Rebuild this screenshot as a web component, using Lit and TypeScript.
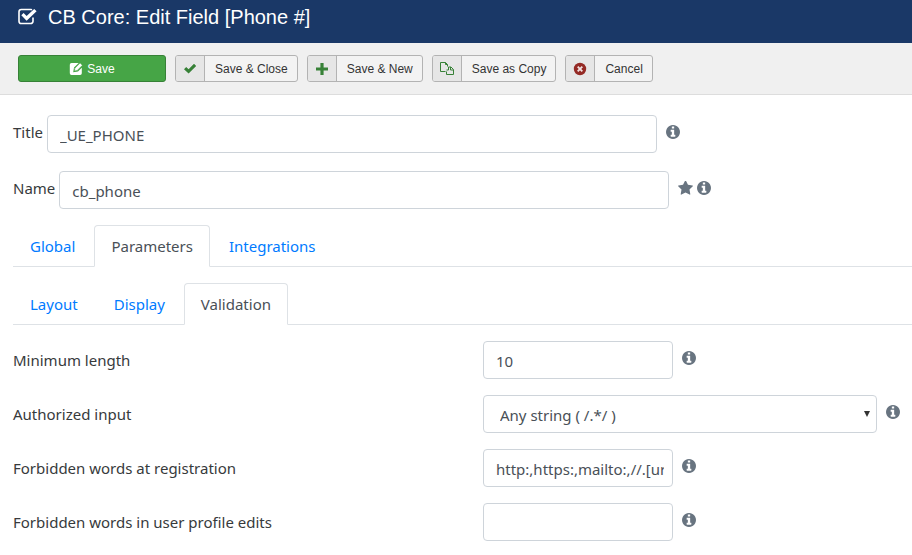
import { LitElement, html, css, svg } from "lit";
import { customElement, state } from "lit/decorators.js";

const infoPath =
  "M1152 1376v-160q0-14-9-23t-23-9h-96v-512q0-14-9-23t-23-9h-320q-14 0-23 9t-9 23v160q0 14 9 23t23 9h96v320h-96q-14 0-23 9t-9 23v160q0 14 9 23t23 9h448q14 0 23-9t9-23zm-128-896v-160q0-14-9-23t-23-9h-192q-14 0-23 9t-9 23v160q0 14 9 23t23 9h192q14 0 23-9t9-23zm640 416q0 209-103 385.5t-279.5 279.5-385.5 103-385.5-103-279.5-279.5-103-385.5 103-385.5 279.5-279.5 385.5-103 385.5 103 279.5 279.5 103 385.5z";
const starPath =
  "M1728 647q0 22-26 48l-363 354 86 500q1 7 1 20 0 21-10.5 35.5t-30.5 14.5q-19 0-40-12l-449-236-449 236q-22 12-40 12-21 0-31.5-14.5t-10.5-35.5q0-6 2-20l86-500-364-354q-25-27-25-48 0-37 56-46l502-73 225-455q19-41 49-41t49 41l225 455 502 73q56 9 56 46z";

const infoIcon = html`<svg class="hint" viewBox="128 128 1536 1536" aria-hidden="true"><path d=${infoPath} /></svg>`;
const starIcon = html`<svg class="hint star" viewBox="64 110 1664 1536" aria-hidden="true"><path d=${starPath} /></svg>`;

const glyphs = {
  check: svg`<path d="M1 7.2 3.2 5 5.6 7.3 11 1.8 13.2 4 5.6 11.4Z" fill="#378137" />`,
  plus: svg`<path d="M5.4 1h3.2v4.4H13v3.2H8.6V13H5.4V8.6H1V5.4h4.4Z" fill="#378137" />`,
  copy: svg`<path d="M5.5 9.500H.5v-9H5.500l2 2v2M5.500.5v2h2M6.500 12.500h7v-5l-2.500-2.500H8.500M6.500 9.500v3M8.500 5v3h-2M10.500 5v3h3" fill="none" stroke="#378137" stroke-width="1" />`,
  cancel: svg`<circle cx="7" cy="7" r="6.2" fill="#942a25" /><path d="m4.7 4.7 4.6 4.6m0-4.6-4.6 4.6" stroke="#f0e0e0" stroke-width="1.9" fill="none" />`,
};

const actions: { glyph: keyof typeof glyphs; label: string }[] = [
  { glyph: "check", label: "Save & Close" },
  { glyph: "plus", label: "Save & New" },
  { glyph: "copy", label: "Save as Copy" },
  { glyph: "cancel", label: "Cancel" },
];

@customElement("app-root")
export class AppRoot extends LitElement {
  @state() private section = "Parameters";
  @state() private panel = "Validation";

  static styles = css`
    :host {
      display: block;
      background: #fff;
      color: #373a3c;
      font: 15px/24px "Noto Sans", "Segoe UI", sans-serif;
    }
    * {
      box-sizing: border-box;
    }
    .header {
      display: flex;
      align-items: center;
      gap: 11px;
      padding: 2px 18px 12px;
      min-height: 43px;
      background: #1a3867;
      color: #fff;
    }
    .header svg {
      width: 19px;
      height: 17px;
      flex: none;
    }
    h1 {
      margin: 0;
      font: 400 20px/28px "Liberation Sans", Arial, sans-serif;
    }
    .toolbar {
      display: flex;
      flex-wrap: wrap;
      gap: 9px;
      padding: 12px 18px;
      background: #f0f0f0;
      border-bottom: 1px solid #ddd;
    }
    .btn {
      display: flex;
      align-items: stretch;
      height: 27px;
      padding: 0;
      border: 1px solid #b3b3b3;
      border-radius: 3px;
      background: #f3f3f3;
      color: #333;
      font: 12px/27px "Liberation Sans", Arial, sans-serif;
      overflow: hidden;
      cursor: pointer;
    }
    .btn svg {
      width: 14px;
      height: 14px;
    }
    .btn .cell {
      display: flex;
      align-items: center;
      justify-content: center;
      width: 29px;
      background: #e6e6e6;
      border-right: 1px solid #b3b3b3;
    }
    .btn .text {
      padding: 0 9px 0 10px;
    }
    .btn.primary {
      width: 148px;
      align-items: center;
      justify-content: center;
      gap: 4px;
      padding-top: 1px;
      background: #46a546;
      border-color: #378137;
      color: #fff;
    }
    .content {
      padding: 20px 0 14px 13px;
    }
    .line {
      display: flex;
      align-items: flex-start;
      margin-bottom: 18px;
    }
    .line label {
      line-height: 34px;
      padding-right: 4px;
    }
    .line input {
      flex: 0 1 610px;
      min-width: 0;
    }
    .line + .tabs {
      margin-top: -2px;
    }
    input,
    select {
      height: 38px;
      padding: 2px 12px 0 12px;
      border: 1px solid #ced4da;
      border-radius: 4px;
      background: #fff;
      color: #495057;
      font: inherit;
    }
    .hints {
      display: flex;
      align-items: center;
      gap: 4px;
      height: 34px;
      padding-left: 9px;
    }
    .hint {
      width: 14px;
      height: 14px;
      flex: none;
      fill: #687480;
    }
    .star {
      width: 15px;
    }
    .tabs {
      display: flex;
      gap: 2px;
      margin-bottom: 16px;
      border-bottom: 1px solid #dee2e6;
    }
    .tab {
      margin-bottom: -1px;
      padding: 8px 16px;
      border: 1px solid transparent;
      border-radius: 4px 4px 0 0;
      color: #007bff;
      text-decoration: none;
    }
    .tab.active {
      border-color: #dee2e6 #dee2e6 #fff;
      background: #fff;
      color: #495057;
    }
    .params {
      display: grid;
      grid-template-columns: 470fr 429fr;
      row-gap: 16px;
    }
    .params label {
      line-height: 38px;
    }
    .field {
      display: flex;
    }
    .field input {
      width: 190px;
      padding-right: 8px;
    }
    .picker {
      display: grid;
      flex: 0 1 394px;
      align-items: center;
    }
    .picker select {
      grid-area: 1 / 1;
      width: 100%;
      padding-left: 16px;
      appearance: none;
    }
    .picker svg {
      grid-area: 1 / 1;
      justify-self: end;
      margin-right: 7px;
      width: 6px;
      height: 6px;
      fill: #333;
      pointer-events: none;
    }
  `;

  private tabs(names: string[], current: string, pick: (name: string) => void) {
    return html`<nav class="tabs">
      ${names.map(
        (name) => html`<a
          href="#${name.toLowerCase()}"
          class="tab ${name === current ? "active" : ""}"
          @click=${(e: Event) => {
            e.preventDefault();
            pick(name);
          }}
          >${name}</a
        >`
      )}
    </nav>`;
  }

  render() {
    return html`
      <header class="header">
        <svg viewBox="0 0 19 17" aria-hidden="true">
          <path d="M15 9.500v3.700a2.300 2.300 0 0 1-2.300 2.300H3.300A2.300 2.300 0 0 1 1 13.200V3.800a2.300 2.300 0 0 1 2.300-2.300h9.400q.8 0 1.300.3" fill="none" stroke="#fff" stroke-width="1.600" />
          <path d="m3.300 7.200 2.300-2.300 3 3L16.200.9l2.400 2.400-10 9.500Z" fill="#fff" />
        </svg>
        <h1>CB Core: Edit Field [Phone #]</h1>
      </header>
      <div class="toolbar">
        <button type="button" class="btn primary">
          <svg viewBox="0 0 14 14" aria-hidden="true">
            <path d="M9.700 1H2.500A1.700 1.700 0 0 0 .8 2.700v8.600A1.700 1.700 0 0 0 2.500 13h8.600a1.700 1.700 0 0 0 1.700-1.700V5.700L9 9.500 4.200 10.300 5 5.600Z" fill="#fff" />
            <path d="m5.900 6.200 5.200-5.200 2.300 2.300-5.200 5.200-2.700.4Z" fill="#fff" stroke="#46a546" stroke-width=".5" />
          </svg>
          Save
        </button>
        ${actions.map(
          (a) => html`<button type="button" class="btn">
            <span class="cell"><svg viewBox="0 0 14 14" aria-hidden="true">${glyphs[a.glyph]}</svg></span>
            <span class="text">${a.label}</span>
          </button>`
        )}
      </div>
      <main class="content">
        <div class="line">
          <label for="title">Title</label>
          <input id="title" type="text" value="_UE_PHONE" />
          <span class="hints">${infoIcon}</span>
        </div>
        <div class="line">
          <label for="name">Name</label>
          <input id="name" type="text" value="cb_phone" />
          <span class="hints">${starIcon}${infoIcon}</span>
        </div>
        ${this.tabs(["Global", "Parameters", "Integrations"], this.section, (n) => (this.section = n))}
        ${this.tabs(["Layout", "Display", "Validation"], this.panel, (n) => (this.panel = n))}
        <div class="params">
          <label for="min">Minimum length</label>
          <div class="field">
            <input id="min" type="text" value="10" />
            <span class="hints">${infoIcon}</span>
          </div>
          <label for="authorized">Authorized input</label>
          <div class="field">
            <span class="picker">
              <select id="authorized">
                <option>Any string ( /.*/ )</option>
              </select>
              <svg viewBox="0 0 6 6" aria-hidden="true"><path d="M0 0h6L3 6Z" /></svg>
            </span>
            <span class="hints">${infoIcon}</span>
          </div>
          <label for="registration">Forbidden words at registration</label>
          <div class="field">
            <input id="registration" type="text" value="http:,https:,mailto:,//.[url]" />
            <span class="hints">${infoIcon}</span>
          </div>
          <label for="profile">Forbidden words in user profile edits</label>
          <div class="field">
            <input id="profile" type="text" />
            <span class="hints">${infoIcon}</span>
          </div>
        </div>
      </main>
    `;
  }
}
